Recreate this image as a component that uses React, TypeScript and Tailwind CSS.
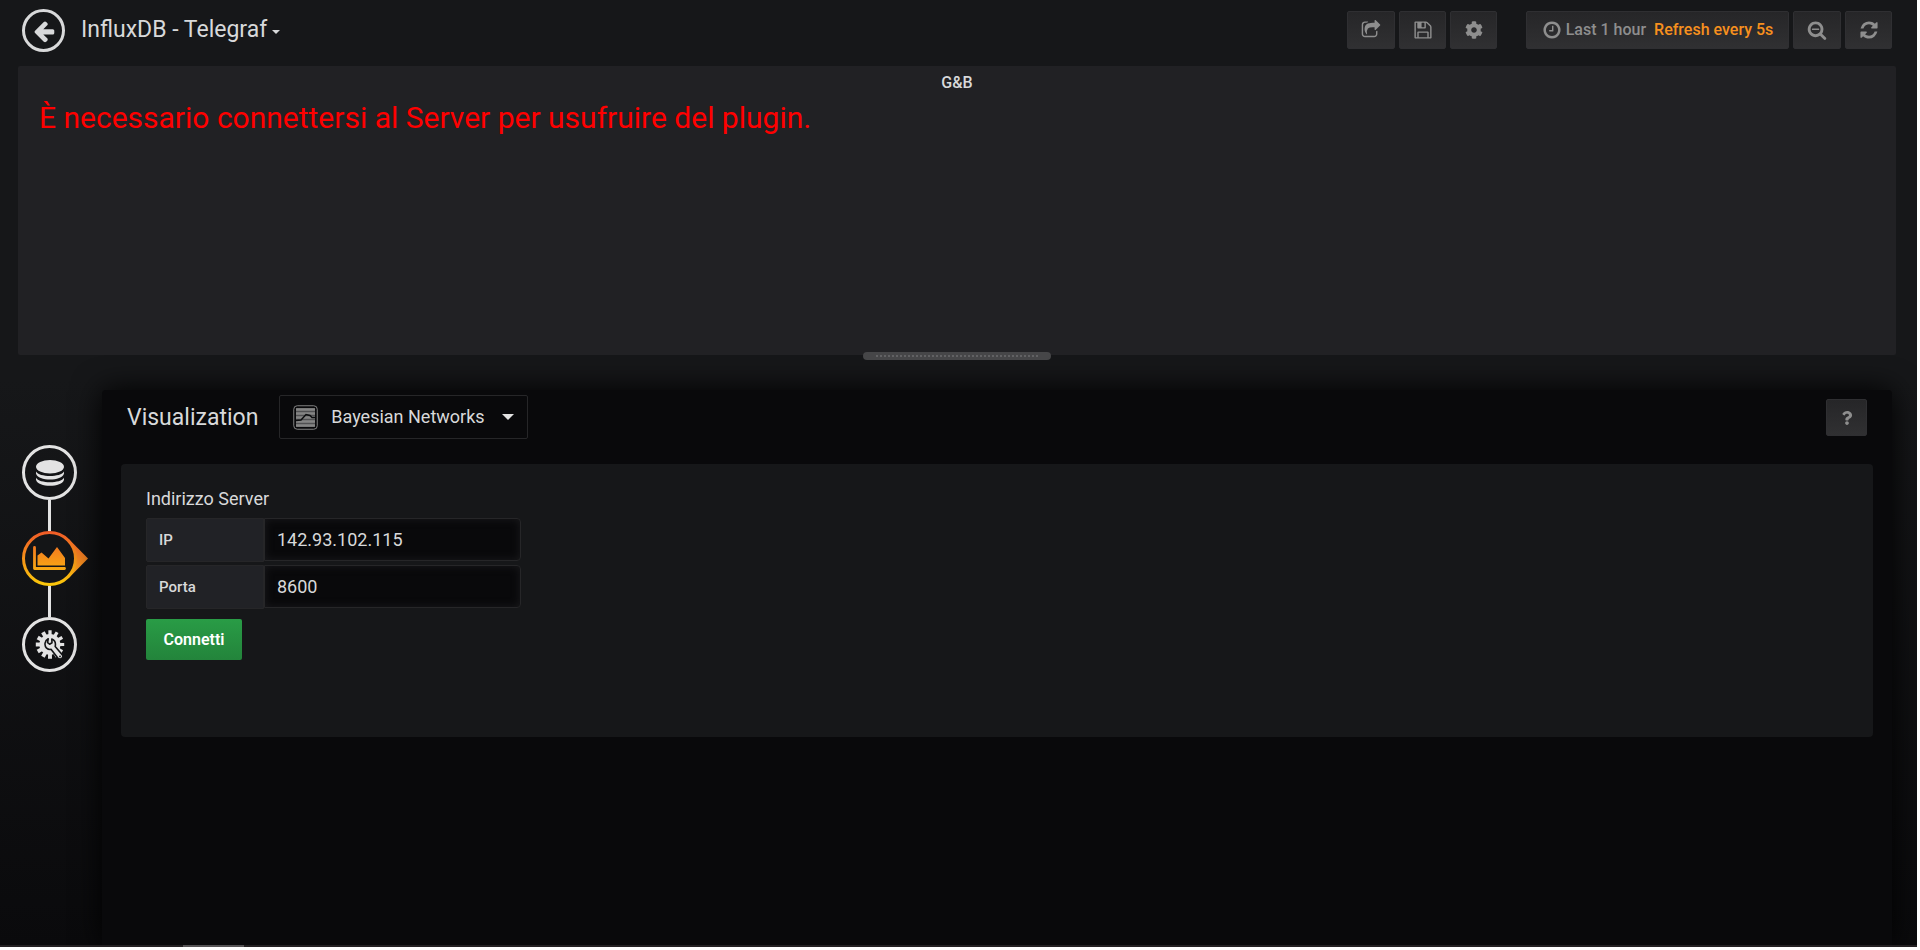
import React from "react";
import { FaCog, FaQuestion } from "react-icons/fa";

const toolButton =
  "flex cursor-pointer items-center justify-center rounded-xs border border-[#2f2f32] bg-linear-to-b from-[#262628] to-[#303032] text-[#8e8e8e]";

function Glyph({ d, className = "size-5" }: { d: string; className?: string }) {
  return (
    <svg viewBox="0 0 1792 1792" className={className} fill="currentColor" aria-hidden="true">
      <path d={d} />
    </svg>
  );
}

const glyphs = {
  back: "M1664 896v128q0 53-32.500 90.500t-84.500 37.500h-704l293 294q38 36 38 90t-38 90l-75 76q-37 37-90 37-52 0-91-37l-651-652q-37-37-37-90 0-52 37-91l651-650q38-38 91-38 52 0 90 38l75 74q38 38 38 91t-38 91l-293 293h704q52 0 84.500 37.500t32.500 90.500z",
  share: "M1472 989v259q0 119-84.500 203.500t-203.500 84.500h-832q-119 0-203.500-84.500t-84.500-203.500v-832q0-119 84.500-203.500t203.500-84.500h255q13 0 22.500 9.500t9.500 22.500q0 27-26 32-77 26-133 60-10 4-16 4h-112q-66 0-113 47t-47 113v832q0 66 47 113t113 47h832q66 0 113-47t47-113v-214q0-19 18-29 28-13 54-37 16-16 35-8 21 9 21 29zm237-496l-384 384q-18 19-45 19-12 0-25-5-39-17-39-59v-192h-160q-323 0-438 131-119 137-74 473 3 23-20 34-8 2-12 2-16 0-26-13-10-14-21-31t-39.500-68.500-49.500-99.500-38.500-114-17.500-122q0-49 3.500-91t14-90 28-88 47-81.500 68.500-74 94.500-61.500 124.500-48.500 159.500-30.500 196.500-11h160v-192q0-42 39-59 13-5 25-5 26 0 45 19l384 384q19 19 19 45t-19 45z",
  save: "M512 1536h768v-384h-768v384zm896 0h128v-896q0-14-10-38.500t-20-34.500l-281-281q-10-10-34-20t-39-10v416q0 40-28 68t-68 28h-576q-40 0-68-28t-28-68v-416h-128v1280h128v-416q0-40 28-68t68-28h832q40 0 68 28t28 68v416zm-384-928v-320q0-13-9.500-22.500t-22.500-9.500h-192q-13 0-22.500 9.500t-9.500 22.500v320q0 13 9.500 22.500t22.500 9.500h192q13 0 22.500-9.500t9.500-22.500zm640 32v928q0 40-28 68t-68 28h-1344q-40 0-68-28t-28-68v-1344q0-40 28-68t68-28h928q40 0 88 20t76 48l280 280q28 28 48 76t20 88z",
  clock: "M1024 544v448q0 14-9 23t-23 9h-320q-14 0-23-9t-9-23v-64q0-14 9-23t23-9h224v-352q0-14 9-23t23-9h64q14 0 23 9t9 23zm416 352q0-148-73-273t-198-198-273-73-273 73-198 198-73 273 73 273 198 198 273 73 273-73 198-198 73-273zm224 0q0 209-103 385.500t-279.500 279.500-385.500 103-385.500-103-279.500-279.500-103-385.500 103-385.500 279.500-279.500 385.500-103 385.500 103 279.500 279.500 103 385.500z",
  zoomOut: "M1088 800v64q0 13-9.500 22.500t-22.500 9.500h-576q-13 0-22.500-9.500t-9.500-22.500v-64q0-13 9.500-22.500t22.500-9.500h576q13 0 22.500 9.500t9.500 22.500zm128 32q0-185-131.500-316.500t-316.500-131.500-316.500 131.500-131.500 316.500 131.500 316.500 316.500 131.500 316.500-131.500 131.500-316.500zm512 832q0 53-37.500 90.500t-90.500 37.500q-54 0-90-38l-343-342q-179 124-399 124-143 0-273.500-55.500t-225-150-150-225-55.500-273.500 55.500-273.500 150-225 225-150 273.500-55.500 273.500 55.500 225 150 150 225 55.500 273.500q0 220-124 399l343 343q37 37 37 90z",
  refresh: "M1639 1056q0 5-1 7-64 268-268 434.500t-478 166.500q-146 0-282.500-55t-243.500-157l-129 129q-19 19-45 19t-45-19-19-45v-448q0-26 19-45t45-19h448q26 0 45 19t19 45-19 45l-137 137q71 66 161 102t187 36q134 0 250-65t186-179q11-17 53-117 8-23 30-23h192q13 0 22.500 9.500t9.500 22.500zm25-800v448q0 26-19 45t-45 19h-448q-26 0-45-19t-19-45 19-45l138-138q-148-137-349-137-134 0-250 65t-186 179q-11 17-53 117-8 23-30 23h-199q-13 0-22.500-9.500t-9.500-22.500v-7q65-268 270-434.500t480-166.500q146 0 284 55.500t245 156.500l130-129q19-19 45-19t45 19 19 45z",
};

function DatabaseIcon() {
  return (
    <svg viewBox="0 0 28 26" className="h-[26px] w-7" fill="#e3e3e3">
      <ellipse cx="14" cy="6.700" rx="14" ry="6.700" />
      <path d="M0 11.500 C3 17.500 25 17.500 28 11.500 V13.500 C26 21.500 2 21.500 0 13.500Z" />
      <path d="M0 17.800 C3 23.800 25 23.800 28 17.800 V19.800 C26 27.800 2 27.800 0 19.800Z" />
    </svg>
  );
}

function ChartTabIcon() {
  return (
    <svg viewBox="0 0 66 55" className="h-[55px] w-[66px]">
      <defs>
        <linearGradient id="tabRing" x1="0" y1="0" x2="0" y2="55" gradientUnits="userSpaceOnUse">
          <stop offset="0" stopColor="#f05a28" />
          <stop offset="1" stopColor="#fbca0a" />
        </linearGradient>
        <linearGradient id="tabArrow" x1="0" y1="8" x2="0" y2="47" gradientUnits="userSpaceOnUse">
          <stop offset="0" stopColor="#f26328" />
          <stop offset="1" stopColor="#fba81a" />
        </linearGradient>
      </defs>
      <path d="M47 8.300 L66 27.500 L47 46.700Z" fill="url(#tabArrow)" />
      <circle cx="27.500" cy="27.500" r="26" fill="#141517" stroke="url(#tabRing)" strokeWidth="3" />
      <path d="M12.500 16.500 V37.500 H42.500" fill="none" stroke="url(#tabRing)" strokeWidth="2.800" strokeLinecap="round" strokeLinejoin="round" />
      <path d="M15.500 34.500 V24.500 L19.500 21.500 L26.500 27.500 L35 16 L43 27 V34.500Z" fill="url(#tabRing)" />
    </svg>
  );
}

function GearWrenchIcon() {
  return (
    <svg viewBox="0 0 30 30" className="size-[30px]">
      <g fill="#e3e3e3">
        <circle cx="15" cy="14.500" r="10.600" />
        {[0, 30, 60, 90, 120, 150].map((a) => (
          <path key={a} d="M13.400 0.300 H16.600 L17 28.700 H13Z" transform={`rotate(${a} 15 14.500)`} />
        ))}
      </g>
      <path
        d="M13.200 8.800 A6 6 0 0 0 11.600 18.200 Q13.600 20 16.200 19.400 L22.800 28 Q25 30 27 28.200 Q28.800 26.400 27 24.400 L20.200 16.400 Q21.400 10.800 16.800 9 L17 12.800 L14.600 14.200 L12.600 12.600Z"
        fill="#e3e3e3"
        stroke="#131416"
        strokeWidth="1.600"
        strokeLinejoin="round"
      />
      <circle cx="25" cy="26.400" r="0.900" fill="#131416" />
    </svg>
  );
}

function PluginIcon() {
  return (
    <svg viewBox="0 0 25 25" className="size-[25px]" fill="none">
      <rect x="0.750" y="0.750" width="23.500" height="23.500" rx="3.500" stroke="#808080" />
      <rect x="3" y="3" width="19" height="19" rx="1" fill="#505052" />
      <path d="M3 4.500H22M3 8.500H22M3 12.500H22M3 16.500H22M3 20.500H22" stroke="#858585" strokeWidth="2.600" />
      <path d="M3 15.500 L8 15 L13 9.500 L17 10.500 L19 12.500 H22" stroke="#0b0c0e" strokeWidth="1.400" />
    </svg>
  );
}

function Field({ id, label, value }: { id: string; label: string; value: string }) {
  return (
    <div className="flex items-start">
      <label
        htmlFor={id}
        className="flex h-11 w-[118px] items-center rounded-l-xs border border-[#262628] bg-[#212226] px-3 text-[15px] font-medium text-[#d8d9da]"
      >
        {label}
      </label>
      <input
        id={id}
        defaultValue={value}
        className="h-[43px] w-[257px] rounded-r-[4px] border border-[#262628] bg-[#09090b] px-3 text-[18px] text-[#d8d9da] shadow-[inset_0_0_8px_#1a1a1d] outline-none"
      />
    </div>
  );
}

export default function App() {
  return (
    <div className="min-h-screen bg-white pr-[3px] pb-[3px] font-[Roboto,sans-serif] text-[#d8d9da]">
      <div className="flex min-h-[947px] flex-col overflow-hidden bg-linear-to-b from-[#161719] from-40% to-[#0a0a0c]">
        <header className="flex h-[66px] items-start pr-[25px] pl-[22px]">
          <button aria-label="Back" className="mt-[9px] flex size-[43px] items-center justify-center rounded-full border-3 border-[#d8d9da]">
            <Glyph d={glyphs.back} className="size-6" />
          </button>
          <button className="mt-[13px] ml-4 flex items-center text-[23px] leading-[34px]">
            InfluxDB - Telegraf
            <span className="mt-1 ml-[5px] border-x-4 border-t-4 border-x-transparent border-t-[#d8d9da]" />
          </button>
          <div className="mt-[11px] ml-auto flex gap-1">
            <button aria-label="Share" className={`${toolButton} h-[38px] w-12`}><Glyph d={glyphs.share} /></button>
            <button aria-label="Save" className={`${toolButton} h-[38px] w-[47px]`}><Glyph d={glyphs.save} /></button>
            <button aria-label="Settings" className={`${toolButton} h-[38px] w-[47px]`}><FaCog className="size-[18px]" /></button>
            <button className={`${toolButton} ml-[25px] h-[38px] w-[263px] text-[16px] font-medium`}>
              <Glyph d={glyphs.clock} />
              <span className="ml-1">Last 1 hour</span>
              <span className="ml-2 text-[#f7901e]">Refresh every 5s</span>
            </button>
            <button aria-label="Zoom out" className={`${toolButton} h-[38px] w-12`}><Glyph d={glyphs.zoomOut} /></button>
            <button aria-label="Refresh" className={`${toolButton} h-[38px] w-[47px]`}><Glyph d={glyphs.refresh} /></button>
          </div>
        </header>

        <section className="relative mr-[21px] ml-[18px] h-[289px] rounded-xs bg-[#212124]">
          <h2 className="pt-[6px] text-center text-[16px] leading-[22px] font-medium">G&amp;B</h2>
          <p className="px-[21px] pt-[3px] text-[30px] leading-[42px] text-[#ff0000]">
            È necessario connettersi al Server per usufruire del plugin.
          </p>
          <div className="absolute -bottom-[5px] left-1/2 flex h-2 w-[188px] -translate-x-1/2 items-center justify-center rounded-[4px] bg-[#464648]">
            <span className="w-[162px] border-t-2 border-dotted border-[#626264]" />
          </div>
        </section>

        <div className="mt-[35px] flex flex-1">
          <nav className="w-[102px] pt-[55px] pl-[22px]">
            <div className="flex w-[55px] flex-col items-center">
              <button aria-label="Queries" className="flex size-[55px] items-center justify-center rounded-full border-3 border-[#e3e3e3]">
                <DatabaseIcon />
              </button>
              <span className="h-[31px] w-[3px] bg-[#e3e3e3]" />
              <button aria-label="Visualization" className="w-[66px] self-start"><ChartTabIcon /></button>
              <span className="h-[31px] w-[3px] bg-[#e3e3e3]" />
              <button aria-label="General" className="flex size-[55px] items-center justify-center rounded-full border-3 border-[#e3e3e3]">
                <GearWrenchIcon />
              </button>
            </div>
          </nav>
          <main className="mr-[25px] flex-1 rounded-t-[4px] bg-[#09090b] px-[19px] shadow-[0_0_30px_#000]">
            <div className="flex h-[74px] items-start pt-[5px] pr-[6px] pl-[6px]">
              <h1 className="text-[23px] leading-[46px]">Visualization</h1>
              <button className="ml-[21px] flex h-11 w-[249px] items-center rounded-xs border border-[#262628] px-[13px] text-[18px] leading-[26px]">
                <PluginIcon />
                <span className="ml-[13px] pb-px">Bayesian Networks</span>
                <span className="ml-auto border-x-6 border-t-6 border-x-transparent border-t-[#e3e3e3]" />
              </button>
              <button aria-label="Help" className={`${toolButton} mt-1 ml-auto h-[37px] w-[41px]`}><FaQuestion className="size-[14px]" /></button>
            </div>
            <form className="h-[273px] rounded-[4px] bg-[#161719] px-[25px] pt-[22px]">
              <h3 className="text-[18px] leading-[26px]">Indirizzo Server</h3>
              <div className="mt-[6px] flex flex-col gap-[3px]">
                <Field id="ip" label="IP" value="142.93.102.115" />
                <Field id="porta" label="Porta" value="8600" />
              </div>
              <button type="button" className="mt-[10px] h-[41px] w-24 rounded-xs bg-linear-to-b from-[#299c46] to-[#23843b] text-[16px] font-semibold text-white">
                Connetti
              </button>
            </form>
          </main>
        </div>
        <div className="z-10 h-[2px] bg-[#232022] pl-[183px]">
          <div className="h-full w-[61px] bg-[#555355]" />
        </div>
      </div>
    </div>
  );
}
